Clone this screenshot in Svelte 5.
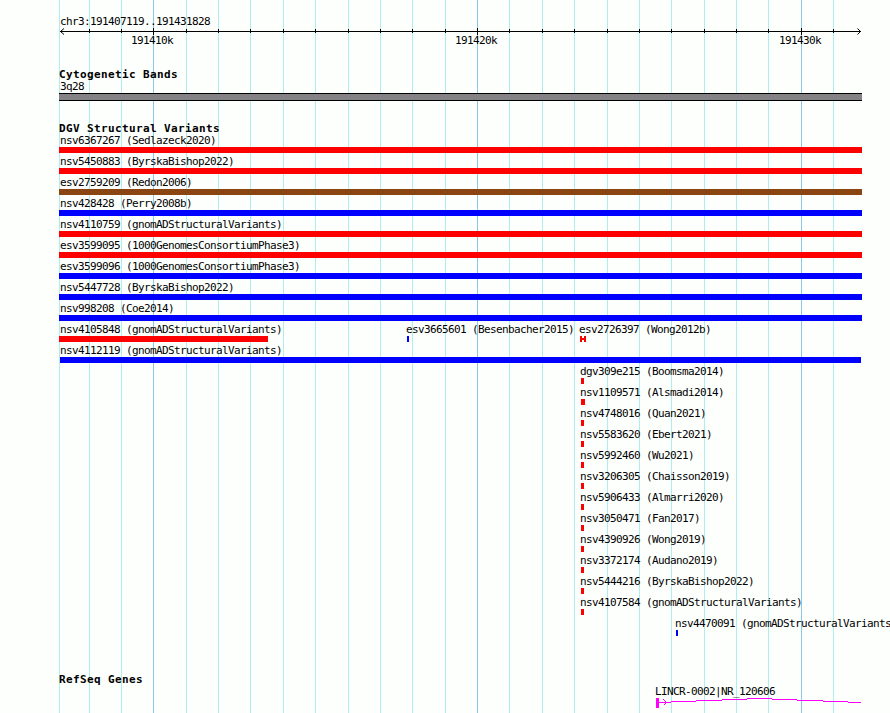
<script lang="ts">
	type Feature = { name: string; x: number; start: number; width: number; color: string; shape?: 'split' };

	const minorLines = [
		59, 89, 121, 186, 218, 250, 283, 315, 348, 380, 412, 445, 509, 542, 574, 607, 639, 671, 704,
		736, 768, 833
	];
	const majorLines = [
		{ x: 153, label: '191410k' },
		{ x: 477, label: '191420k' },
		{ x: 801, label: '191430k' }
	];

	const wide = (name: string, color: string): Feature[] => [
		{ name, x: 60, start: 59, width: 803, color }
	];
	const small = (name: string, width = 3): Feature[] => [
		{ name, x: 580, start: 581, width, color: 'red' }
	];

	const rows: Feature[][] = [
		wide('nsv6367267 (Sedlazeck2020)', 'red'),
		wide('nsv5450883 (ByrskaBishop2022)', 'red'),
		wide('esv2759209 (Redon2006)', 'brown'),
		wide('nsv428428 (Perry2008b)', 'blue'),
		wide('nsv4110759 (gnomADStructuralVariants)', 'red'),
		wide('esv3599095 (1000GenomesConsortiumPhase3)', 'red'),
		wide('esv3599096 (1000GenomesConsortiumPhase3)', 'blue'),
		wide('nsv5447728 (ByrskaBishop2022)', 'blue'),
		wide('nsv998208 (Coe2014)', 'blue'),
		[
			{ name: 'nsv4105848 (gnomADStructuralVariants)', x: 60, start: 59, width: 209, color: 'red' },
			{ name: 'esv3665601 (Besenbacher2015)', x: 406, start: 407, width: 2, color: 'blue' },
			{ name: 'esv2726397 (Wong2012b)', x: 579, start: 580, width: 6, color: 'red', shape: 'split' }
		],
		[{ name: 'nsv4112119 (gnomADStructuralVariants)', x: 60, start: 60, width: 801, color: 'blue' }],
		small('dgv309e215 (Boomsma2014)'),
		small('nsv1109571 (Alsmadi2014)', 4),
		small('nsv4748016 (Quan2021)'),
		small('nsv5583620 (Ebert2021)'),
		small('nsv5992460 (Wu2021)'),
		small('nsv3206305 (Chaisson2019)'),
		small('nsv5906433 (Almarri2020)'),
		small('nsv3050471 (Fan2017)'),
		small('nsv4390926 (Wong2019)'),
		small('nsv3372174 (Audano2019)'),
		small('nsv5444216 (ByrskaBishop2022)'),
		small('nsv4107584 (gnomADStructuralVariants)'),
		[{ name: 'nsv4470091 (gnomADStructuralVariants)', x: 675, start: 676, width: 2, color: 'blue' }]
	];
</script>

<div class="browser">
	<svg class="gridlines" width="890" height="713" aria-hidden="true">
		{#each minorLines as x}
			<rect class="minor" {x} y="0" width="1" height="713" />
		{/each}
		{#each majorLines as line}
			<rect class="major" x={line.x} y="0" width="1" height="713" />
		{/each}
	</svg>

	<header class="ruler">
		<div class="region">chr3:191407119..191431828</div>
		<svg class="axis" width="890" height="8">
			<rect x="60" y="3" width="801" height="1" />
			<path d="M64 .5L60.5 3.5L64 6.5M857.5 .5L860.5 3.5L857.5 6.5" />
			{#each minorLines.slice(1) as x}
				<rect {x} y="1" width="1" height="4" />
			{/each}
			{#each majorLines as line}
				<rect x={line.x} y="0" width="1" height="7" />
			{/each}
		</svg>
		<div class="ticks">
			{#each majorLines as line}
				<span style="margin-left: {line.x - 22}px">{line.label}</span>
			{/each}
		</div>
	</header>

	<section class="cytobands">
		<h2>Cytogenetic Bands</h2>
		<div class="label band-name">3q28</div>
		<div class="band"></div>
	</section>

	<section class="variants">
		<h2>DGV Structural Variants</h2>
		{#each rows as row}
			<div class="row">
				{#each row as feature (feature.name)}
					<div class="feature">
						<div class="label" style="margin-left: {feature.x}px">{feature.name}</div>
						<div
							class="bar {feature.color}"
							class:split={feature.shape === 'split'}
							style="margin-left: {feature.start}px; width: {feature.width}px"
						></div>
					</div>
				{/each}
			</div>
		{/each}
	</section>

	<section class="genes">
		<h2>RefSeq Genes</h2>
		<div class="label gene-name">LINCR-0002|NR_120606</div>
		<svg class="gene" width="890" height="10">
			<rect x="656" y="0" width="3" height="10" />
			<path
				d="M659 4.5H671M671 3.5H696M696 2.5H722M722 1.5H747M747 .5H772M772 1.5H797M797 2.5H823M823 3.5H848M848 4.5H861"
			/>
			<path d="M663.5 1.5L666.5 4.5L663.5 7.5" />
		</svg>
	</section>
</div>

<style>
	:global(body) {
		background: #fdfffd;
		overflow: hidden;
	}

	.browser {
		position: relative;
		box-sizing: border-box;
		width: 890px;
		height: 713px;
		padding-top: 16px;
		overflow: hidden;
		background: #fdfffd;
		color: #000;
		font-family: 'DejaVu Sans Mono', monospace;
		font-size: 11px;
		line-height: 12px;
		letter-spacing: -0.622px;
		white-space: nowrap;
	}

	.gridlines {
		position: absolute;
		top: 0;
		left: 0;
	}

	.minor {
		fill: #afeeee;
	}

	.major {
		fill: #87c9e6;
	}

	.ruler,
	section {
		position: relative;
	}

	.ruler {
		height: 52px;
	}

	.region {
		height: 12px;
		line-height: 11px;
		padding-left: 60px;
	}

	svg {
		display: block;
		shape-rendering: crispEdges;
	}

	.axis path {
		fill: none;
		stroke: #000;
		shape-rendering: auto;
	}

	.ticks {
		display: grid;
		height: 11px;
		line-height: 11px;
		margin-top: -1px;
	}

	.ticks span {
		grid-area: 1 / 1;
	}

	h2 {
		height: 12px;
		margin: 0;
		padding-left: 59px;
		font-size: 11px;
		font-weight: bold;
		line-height: 14px;
		letter-spacing: 0.378px;
	}

	.label {
		height: 11px;
		line-height: 9px;
	}

	.cytobands {
		height: 54px;
	}

	.band-name {
		height: 13px;
		line-height: 13px;
		padding-left: 60px;
	}

	.band {
		box-sizing: border-box;
		width: 803px;
		height: 8px;
		margin-left: 59px;
		border: solid #000;
		border-width: 1px 0;
		background: #848284;
	}

	.variants {
		height: 551px;
	}

	.variants h2 {
		height: 14px;
	}

	.row {
		display: grid;
		height: 21px;
	}

	.feature {
		grid-area: 1 / 1;
	}

	.bar {
		height: 6px;
	}

	.red {
		background: #f00;
	}

	.blue {
		background: #00f;
	}

	.brown {
		background: #8b4513;
	}

	.split {
		background: linear-gradient(90deg, #f00 2px, transparent 2px 4px, #f00 4px),
			linear-gradient(transparent 2px, #f00 2px 4px, transparent 4px);
	}

	.gene-name {
		height: 13px;
		line-height: 13px;
		padding-left: 655px;
	}

	.gene {
		fill: #f0f;
	}

	.gene path {
		fill: none;
		stroke: #f0f;
	}
</style>
